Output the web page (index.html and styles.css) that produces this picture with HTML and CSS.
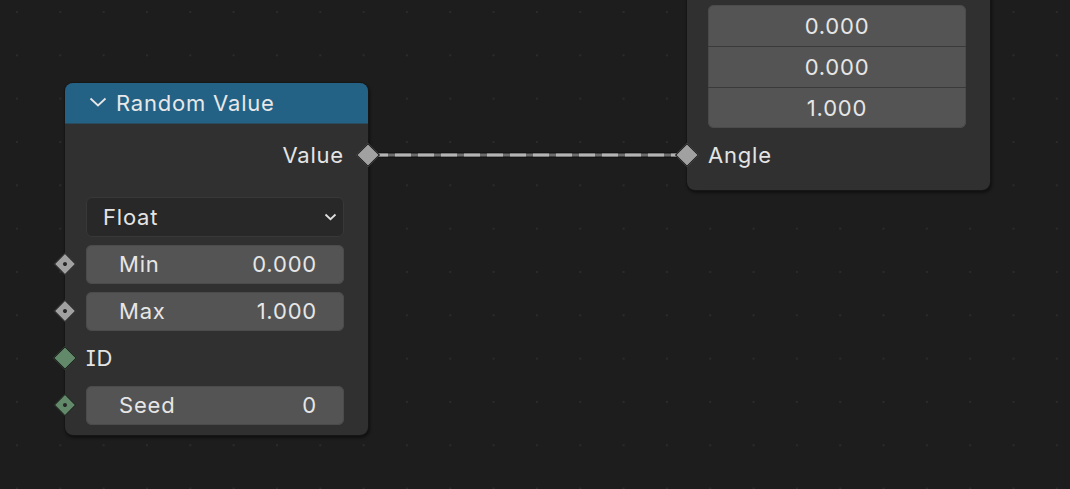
FILE: index.html
```html
<!DOCTYPE html>
<html>
<head>
<meta charset="utf-8">
<link rel="stylesheet" href="styles.css">
</head>
<body>
<div class="canvas">
  <svg class="link" width="320" height="12" viewBox="0 0 320 12">
    <line x1="0" y1="6" x2="310" y2="6" stroke="#151515" stroke-width="6"/>
    <line x1="0" y1="6" x2="310" y2="6" stroke="#6c6c6c" stroke-width="3"/>
    <line x1="0" y1="6" x2="310" y2="6" stroke="#b4b4b4" stroke-width="3" stroke-dasharray="16 7"/>
  </svg>

  <div class="node node-random">
    <div class="node-header">
      <svg class="collapse" width="18" height="10" viewBox="0 0 18 10"><path d="M1.5 1.5 L9 8.5 L16.5 1.5" fill="none" stroke="#e6e6e6" stroke-width="1.8"/></svg>
      <span>Random Value</span>
    </div>
    <div class="node-body">
      <div class="row row-output">
        <span class="label">Value</span>
        <span class="socket socket-float socket-right socket-big"></span>
      </div>
      <div class="dropdown">
        <span>Float</span>
        <svg width="13" height="8" viewBox="0 0 13 8"><path d="M1.5 1.5 L6.5 6.2 L11.5 1.5" fill="none" stroke="#e0e0e0" stroke-width="1.8"/></svg>
      </div>
      <div class="row">
        <span class="socket socket-float socket-left dot"></span>
        <div class="field"><span>Min</span><span>0.000</span></div>
      </div>
      <div class="row">
        <span class="socket socket-float socket-left dot"></span>
        <div class="field"><span>Max</span><span>1.000</span></div>
      </div>
      <div class="row row-plain">
        <span class="socket socket-int socket-left socket-big"></span>
        <span class="label">ID</span>
      </div>
      <div class="row">
        <span class="socket socket-int socket-left dot"></span>
        <div class="field"><span>Seed</span><span>0</span></div>
      </div>
    </div>
  </div>

  <div class="node node-vector">
    <div class="node-body vector-body">
      <div class="vector">
        <div class="vrow">0.000</div>
        <div class="vrow">0.000</div>
        <div class="vrow">1.000</div>
      </div>
      <div class="row row-plain">
        <span class="socket socket-float socket-left socket-big"></span>
        <span class="label">Angle</span>
      </div>
    </div>
  </div>
</div>
</body>
</html>
```

FILE: styles.css
```css
* { box-sizing: border-box; }
html, body {
  margin: 0;
  padding: 0;
  width: 1070px;
  height: 489px;
  overflow: hidden;
  background: #1d1d1d;
}
.canvas {
  position: relative;
  width: 1070px;
  height: 489px;
  background-color: #1d1d1d;
  background-image: radial-gradient(circle, #2b2b2b 0.9px, transparent 1.4px);
  background-size: 43.33px 43.33px;
  background-position: -4.7px -9.7px;
  font-family: "Inter", "DejaVu Sans", sans-serif;
  font-feature-settings: "cv08" 1, "ss08" 1;
  font-size: 22px;
  letter-spacing: 0.8px;
  color: #e4e4e4;
}
.node {
  position: absolute;
  background: #303030;
  border-radius: 8px;
  box-shadow: 0 0 0 1px #161616, 1px 2px 3px 1px rgba(0,0,0,0.45);
}
.node-random {
  left: 65px;
  top: 83px;
  width: 303px;
  height: 352px;
}
.node-header {
  height: 41px;
  background: #236185;
  border-radius: 8px 8px 0 0;
  display: flex;
  align-items: center;
  gap: 9px;
  padding-left: 24px;
  color: #e8e8e8;
  border-bottom: 1px solid #2a4a5e;
}
.collapse { margin-top: -2px; }
.node-body {
  display: flex;
  flex-direction: column;
  gap: 7px;
  padding: 11px 24px 11px 21px;
}
.row {
  position: relative;
  height: 40px;
  display: flex;
  align-items: center;
}
.row-output {
  justify-content: flex-end;
  margin-bottom: 15px;
}
.field {
  flex: 1;
  height: 39px;
  background: #545454;
  border-radius: 6px;
  box-shadow: inset 0 0 0 1px #4b4b4b;
  display: flex;
  align-items: center;
  justify-content: space-between;
  padding: 0 27px 0 33px;
  color: #e6e6e6;
}
.dropdown {
  height: 40px;
  background: #282828;
  border: 1px solid #383838;
  border-radius: 6px;
  display: flex;
  align-items: center;
  justify-content: space-between;
  padding: 0 6px 0 16px;
}
.socket {
  position: absolute;
  top: 50%;
  width: 16px;
  height: 16px;
  border: 1.5px solid #171717;
  transform: translate(-50%, -50%) rotate(45deg);
  display: flex;
  align-items: center;
  justify-content: center;
}
.socket-big {
  width: 17px;
  height: 17px;
}
.socket-left { left: -21px; }
.socket-right { left: calc(100% + 24px); }
.socket-float { background: #a1a1a1; }
.socket-int { background: #628a6a; }
.dot::after {
  content: "";
  width: 4px;
  height: 4px;
  background: #262626;
  border-radius: 50%;
}
.node-vector {
  left: 687px;
  top: -50px;
  width: 303px;
  height: 240px;
}
.vector-body {
  height: 100%;
  justify-content: flex-end;
  padding: 0 24px 15px 21px;
}
.vector {
  background: #545454;
  border-radius: 6px;
  box-shadow: inset 0 0 0 1px #4b4b4b;
  display: flex;
  flex-direction: column;
}
.vrow {
  height: 41px;
  display: flex;
  align-items: center;
  justify-content: center;
  color: #e6e6e6;
  border-top: 1px solid #3a3a3a;
}
.vrow:first-child { border-top: none; }
.link {
  position: absolute;
  left: 372px;
  top: 149px;
}
```
